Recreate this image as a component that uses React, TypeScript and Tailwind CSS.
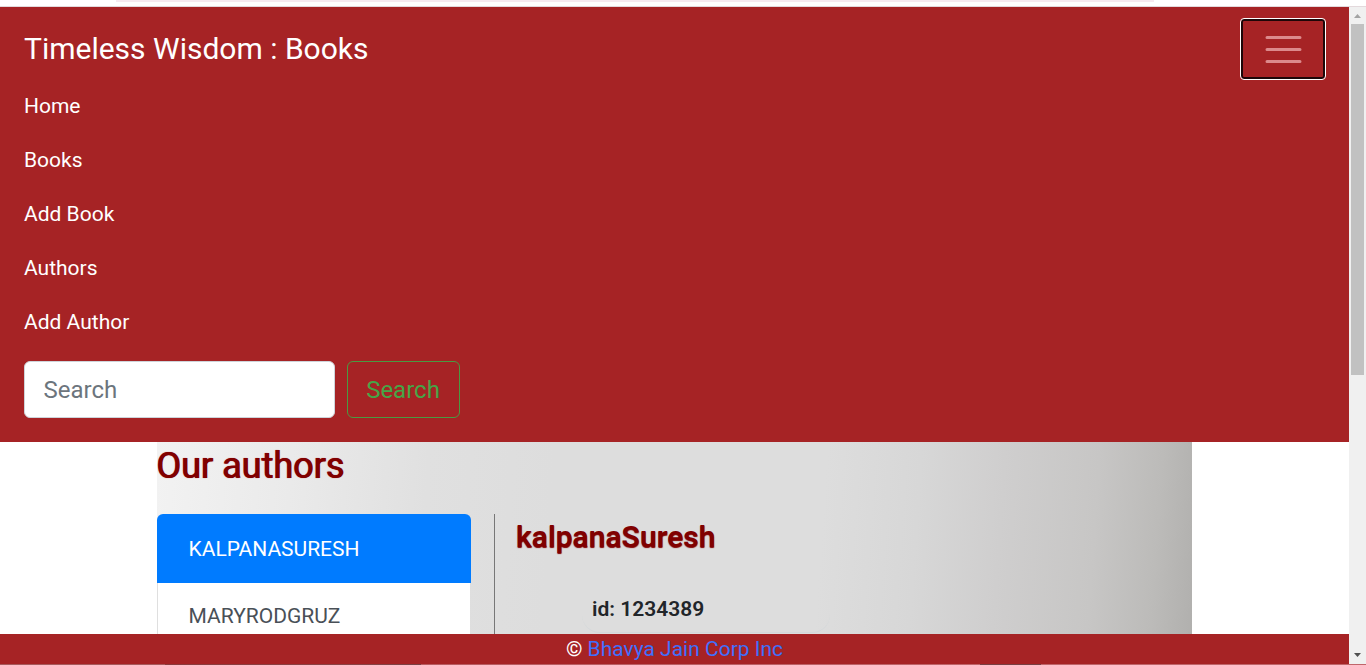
import React from "react";

const links = ["Home", "Books", "Add Book", "Authors", "Add Author"];

function Toggler() {
  return (
    <button
      type="button"
      aria-label="Toggle navigation"
      className="flex h-[60px] w-[84px] items-center justify-center rounded-[3px] border-2 border-[#1d0608] outline outline-1 outline-white"
    >
      <svg width="45" height="45" viewBox="0 0 30 30" fill="none">
        <path
          d="M4 7h22M4 15h22M4 23h22"
          stroke="#dc8a8c"
          strokeWidth="2"
          strokeLinecap="round"
          strokeMiterlimit="10"
        />
      </svg>
    </button>
  );
}

function Header() {
  return (
    <header className="h-[435px] shrink-0 bg-[#a62325] px-6 pt-3 text-white">
      <div className="flex h-[60px] items-center justify-between">
        <a className="pb-[2px] text-[30px] leading-[45px]">Timeless Wisdom : Books</a>
        <Toggler />
      </div>
      <ul>
        {links.map((label) => (
          <li key={label} className="flex h-[54px] items-center pt-[2px] text-[21px]">
            {label}
          </li>
        ))}
      </ul>
      <form className="mt-3 flex gap-3">
        <input
          type="search"
          placeholder="Search"
          className="h-[57px] w-[311px] rounded-[6px] border border-[#ced4da] bg-white px-[18.500px] text-2xl placeholder:text-[#6c757d]"
        />
        <button
          type="button"
          className="h-[57px] w-[113px] rounded-[6px] border border-[#4a9a42] pr-px text-2xl text-[#45a647]"
        >
          Search
        </button>
      </form>
    </header>
  );
}

function Authors() {
  return (
    <main className="ml-[157px] flex min-h-0 w-[1035px] flex-1 flex-col overflow-hidden bg-[linear-gradient(94deg,#f2f2f2_0%,#eaeaea_13%,#e0e0e0_26%,#dddddd_38%,#dddddd_64%,#d7d7d7_73%,#cfcece_81%,#c7c6c5_90%,#bcbbb9_96%,#b1b0ae_100%)]">
      <h1 className="h-[72px] shrink-0 text-[36px] font-normal leading-[48px] text-[#800000] [text-shadow:1px_0_0_#800000,0_0_1px_#c04040]">
        <span className="-ml-px">Our authors</span>
      </h1>
      <div className="flex flex-1">
        <div className="w-[314px] text-[21px]">
          <div className="flex h-[69px] items-center rounded-t-[6px] bg-[#007bff] pl-[31.500px] pt-[2px] text-white">
            KALPANASURESH
          </div>
          <div className="mr-px flex h-[67px] items-center border-l border-[#dfdfdf] bg-white pl-[30.500px] text-[#495057]">
            MARYRODGRUZ
          </div>
        </div>
        <section className="ml-[23px] flex-1 border-l border-[#777777] pl-[21px]">
          <h2 className="h-[72px] text-[30px] font-semibold leading-[46px] text-[#800000] [text-shadow:0_0.500px_1px_#800000]">
            kalpanaSuresh
          </h2>
          <div className="ml-[66px] h-[47px] w-[248px] rounded-b-[18px] border-b border-[#d4d8da] pl-[10px] text-[21px] font-semibold leading-[46px] text-[#212529]">
            id: 1234389
          </div>
        </section>
      </div>
    </main>
  );
}

function Scrollbar() {
  return (
    <div className="flex w-[17px] shrink-0 flex-col items-center bg-[#f0f0f0]">
      <svg width="17" height="17" viewBox="0 0 17 17">
        <path d="M5 11h7L8.500 7z" fill="#a3a3a3" />
      </svg>
      <div className="h-[351px] w-[13px] bg-[#c1c1c1]" />
      <svg className="mt-auto" width="17" height="17" viewBox="0 0 17 17">
        <path d="M5 6h7L8.500 10z" fill="#505050" />
      </svg>
    </div>
  );
}

export default function App() {
  return (
    <div className="flex h-[665px] w-[1366px] flex-col overflow-hidden bg-white font-['Roboto',sans-serif]">
      <div className="h-[7px] shrink-0 border-b border-[#e3d9dc] bg-white">
        <div className="ml-[116px] h-[2px] w-[1038px] bg-[#f6eaf0]" />
      </div>
      <div className="flex min-h-0 flex-1">
        <div className="flex w-[1349px] flex-col">
          <Header />
          <Authors />
          <footer className="h-[30px] shrink-0 bg-[#a62325] text-center text-[21px] leading-[31px] text-white">
            © <a className="text-[#3f70fb]">Bhavya Jain Corp Inc</a>
          </footer>
        </div>
        <Scrollbar />
      </div>
      <div className="h-px shrink-0 bg-[linear-gradient(90deg,#a85a5c_0,#a85a5c_165px,#8a3a3c_165px,#8a4345_360px,#784043_421px,#b85b60_421px,#c0656a_980px,#784043_980px,#784043_1041px,#c0656a_1041px)]" />
    </div>
  );
}
